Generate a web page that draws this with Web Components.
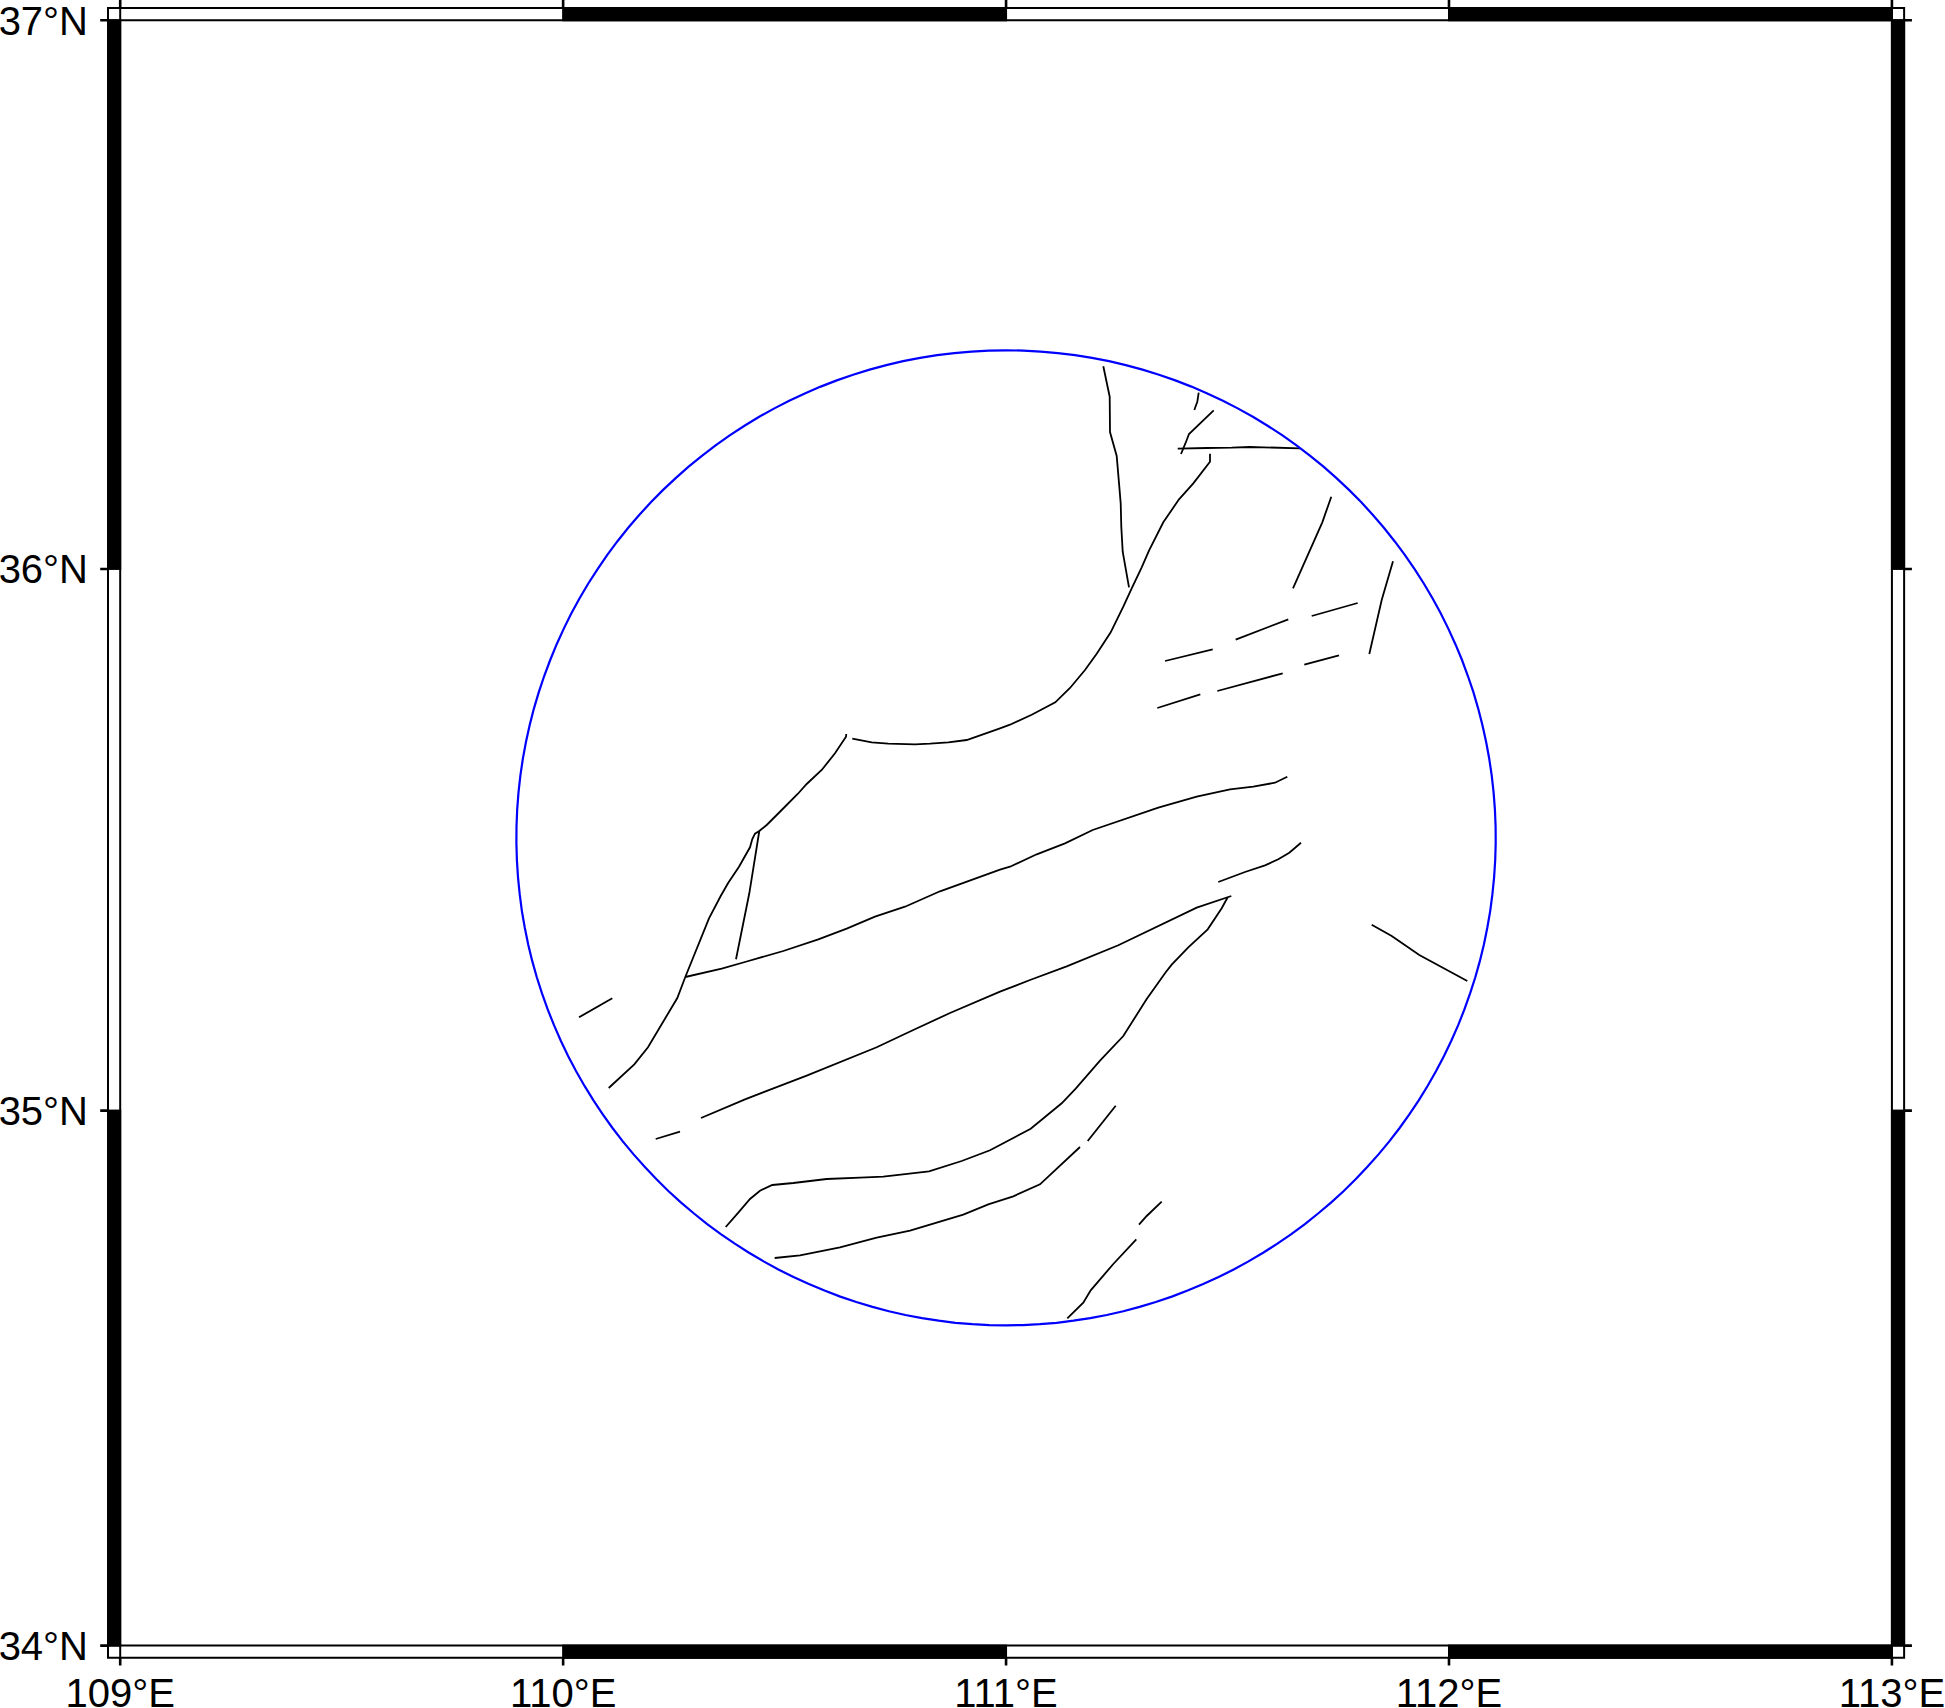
<!DOCTYPE html>
<html lang="en">
<head>
<meta charset="utf-8">
<title>Fault map 109–113°E, 34–37°N</title>
<style>
  body { margin: 0; background: #fff; color: #000; font-family: "Liberation Sans", Arial, sans-serif; }
</style>
</head>
<body>
<geo-map>
  <map-faults></map-faults>
  <map-radius lon="111" lat="35.5" degrees="0.9"></map-radius>
  <map-frame></map-frame>
</geo-map>

<script>
// Ellipsoidal Mercator projection shared by the layers
const WEST = 109, EAST = 113, SOUTH = 34, NORTH = 37;
const LEFT = 120.2, SCALE = 442.93, TOP = 20.3;
const RAD = Math.PI / 180;
const E2 = 0.00669438;
const isometric = lat => {
  const s = Math.sin(lat * RAD);
  return (Math.atanh(s) - Math.sqrt(E2) * Math.atanh(Math.sqrt(E2) * s)) / RAD;
};
const px = lon => LEFT + (lon - WEST) * SCALE;
const py = lat => TOP + (isometric(NORTH) - isometric(lat)) * SCALE;

const layer = body => `
  <style>
    :host { display: block; min-width: 0; }
    svg { display: block; width: 100%; height: auto; overflow: hidden; }
    text { font-size: 40px; fill: #000; }
  </style>
  <svg viewBox="0 0 1945 1708">${body}</svg>`;

class GeoMap extends HTMLElement {
  constructor() {
    super();
    this.attachShadow({ mode: 'open' }).innerHTML = `
      <style>
        :host { display: grid; grid-template-columns: minmax(0, 1fr); }
        ::slotted(*) { grid-area: 1 / 1; }
      </style>
      <slot></slot>`;
  }
}

class MapFrame extends HTMLElement {
  constructor() {
    super();
    const x0 = px(WEST), x1 = px(EAST), y0 = py(NORTH), y1 = py(SOUTH);
    const band = 12.2, tick = 20;
    let lines = '', labels = '', fills = '';
    for (let lon = WEST; lon <= EAST; lon++) {
      const x = px(lon);
      lines += `M${x} ${y0 - band}V${y0 - tick - 1}M${x} ${y1 + band}V${y1 + tick}`;
      labels += `<text x="${x}" y="1707" text-anchor="middle">${lon}°E</text>`;
    }
    for (let lat = SOUTH; lat <= NORTH; lat++) {
      const y = py(lat);
      lines += `M${x0 - band} ${y}H${x0 - tick}M${x1 + band} ${y}H${x1 + tick}`;
      labels += `<text x="88" y="${Math.round(y + 14.5)}" text-anchor="end">${lat}°N</text>`;
    }
    const box = (x, y, w, h) => `<rect x="${x}" y="${y}" width="${w}" height="${h}"/>`;
    for (let lon = WEST + 1; lon < EAST; lon += 2) {
      fills += box(px(lon), y0 - band, SCALE, band) + box(px(lon), y1, SCALE, band);
    }
    for (let lat = SOUTH; lat < NORTH; lat += 2) {
      const h = py(lat) - py(lat + 1);
      fills += box(x0 - band, py(lat + 1), band, h) + box(x1, py(lat + 1), band, h);
    }
    this.attachShadow({ mode: 'open' }).innerHTML = layer(`
      <g stroke="#000" stroke-width="2" fill="#000">
        <g>${fills}</g>
        <path fill="none" d="M${x0 - band} ${y0 - band}H${x1 + band}V${y1 + band}H${x0 - band}Z
          M${x0 - band} ${y0}H${x1 + band}M${x0 - band} ${y1}H${x1 + band}
          M${x0} ${y0 - band}V${y1 + band}M${x1} ${y0 - band}V${y1 + band}"/>
        <path fill="none" stroke-width="2.6" d="${lines}"/>
      </g>
      ${labels}`);
  }
}

// Points within a great-circle distance of a centre
class MapRadius extends HTMLElement {
  connectedCallback() {
    const lon = +this.getAttribute('lon'), lat = +this.getAttribute('lat') * RAD;
    const r = +this.getAttribute('degrees') * RAD;
    const points = [];
    for (let a = 0; a < 360; a += 2) {
      const t = a * RAD;
      const phi = Math.asin(Math.sin(lat) * Math.cos(r) + Math.cos(lat) * Math.sin(r) * Math.cos(t));
      const d = Math.atan2(Math.sin(t) * Math.sin(r) * Math.cos(lat),
                           Math.cos(r) - Math.sin(lat) * Math.sin(phi));
      points.push(`${px(lon + d / RAD).toFixed(1)},${py(phi / RAD).toFixed(1)}`);
    }
    this.attachShadow({ mode: 'open' }).innerHTML =
      layer(`<polygon points="${points.join(' ')}" fill="none" stroke="#00f" stroke-width="2.2"/>`);
  }
}

const FAULTS = [
  '846.3,734 846,736.7 835,753.3 821.7,770 806.7,784 797.7,794 781.7,810 766.7,825 759.3,831 755,833.7 752.3,839 750,847.3 739,866.7 728.3,882.7 720.7,896 709,918.3 685.3,977 677.3,998 648,1047.3 634.3,1064.3 608.7,1088',
  '759.3,831 749.3,893.3 736,959.3',
  '852.3,738.7 871.7,742.3 888.3,743.7 915,744.3 930,743.7 948.3,742.3 966.7,740 1000,728.3 1010,724.7 1031.7,714.7 1055.3,702.3 1070,688 1085,670 1096.7,653.7 1110.7,632.3 1123.3,606.7 1131.7,588.3 1141.7,567.3 1149,550.7 1163.3,522.3 1179,499.3 1193.3,483.3 1210,461.7 1210,453.7',
  '1103.3,366.3 1109.7,396.7 1110,432 1116.7,456 1119.3,486.7 1120.7,503.3 1121.3,526.7 1122.7,551.7 1129,587.3',
  '1198.7,392.7 1197.3,401.7 1194.3,410',
  '1213.7,410.3 1189,434 1185.7,442.7 1181,454',
  '1177.7,448.7 1206.7,448 1231.7,447.7 1250,447 1263.3,447.3 1300,448.3',
  '1331.3,496.7 1322.3,522.3 1293,588.3',
  '1393,561.3 1381.7,600 1369.3,654',
  '1165,661 1212.7,649.3', '1235.7,639.7 1288.3,619.3', '1311.7,616 1357.7,603',
  '1157.3,708 1200.3,694.3', '1217.3,691 1282.7,673.3', '1304.3,664.7 1339,655.3',
  '685.3,977 721.7,968.7 745,962 783.3,951 818.3,939.3 846.7,928.7 875,916.7 905,906.7 940,891.3 1000,869.7 1010,866.7 1036.7,854.3 1065,843.3 1092.7,830 1158.3,807.7 1196.7,796.7 1230,789.3 1253.3,786.7 1275,782.7 1287.3,776.7',
  '1218.3,882 1245,872 1265,865.3 1278.3,859.3 1289.3,852.7 1301,842.7',
  '701,1118 745,1099.3 806.7,1075.7 876.7,1047.3 911.7,1030.7 950,1013 1000,991.7 1030,980 1066.7,966.3 1118.3,945.3 1196.7,907.7 1231.3,896',
  '1227.7,897.3 1221.7,908.3 1207.7,929.3 1188.3,947.3 1171.7,964.7 1165.7,972.3 1146.7,999 1123.3,1036 1100,1060.7 1075.7,1088.7 1061.7,1103.3 1030.7,1128.7 1000,1145 990,1150.3 961.7,1161 929,1171.3 883.3,1176.7 860,1177.7 826.7,1179 793.3,1183 772.3,1185 760,1190.7 750,1199 738.3,1212.7 725.7,1227',
  '774.7,1258 800,1255.3 840,1247.3 876.7,1237.7 910,1230.7 963.3,1214.7 988.3,1204.3 1000,1200.7 1013.3,1196.3 1040,1184.3 1080,1147',
  '1087.7,1141 1115.7,1105.7',
  '1161.7,1201.7 1146.7,1216 1139,1224.7',
  '1136.3,1239.3 1113.3,1264 1090.7,1290.3 1083.3,1302.7 1067.3,1318.3',
  '1371.7,924.7 1391.7,936 1419.3,955 1467.3,981',
  '579,1017.3 612.3,998.3', '655.7,1139 680,1131.7'
];

class MapFaults extends HTMLElement {
  constructor() {
    super();
    this.attachShadow({ mode: 'open' }).innerHTML = layer(
      `<g fill="none" stroke="#000" stroke-width="1.8">${
        FAULTS.map(p => `<polyline points="${p}"/>`).join('')}</g>`);
  }
}

customElements.define('geo-map', GeoMap);
customElements.define('map-frame', MapFrame);
customElements.define('map-radius', MapRadius);
customElements.define('map-faults', MapFaults);
</script>
</body>
</html>
